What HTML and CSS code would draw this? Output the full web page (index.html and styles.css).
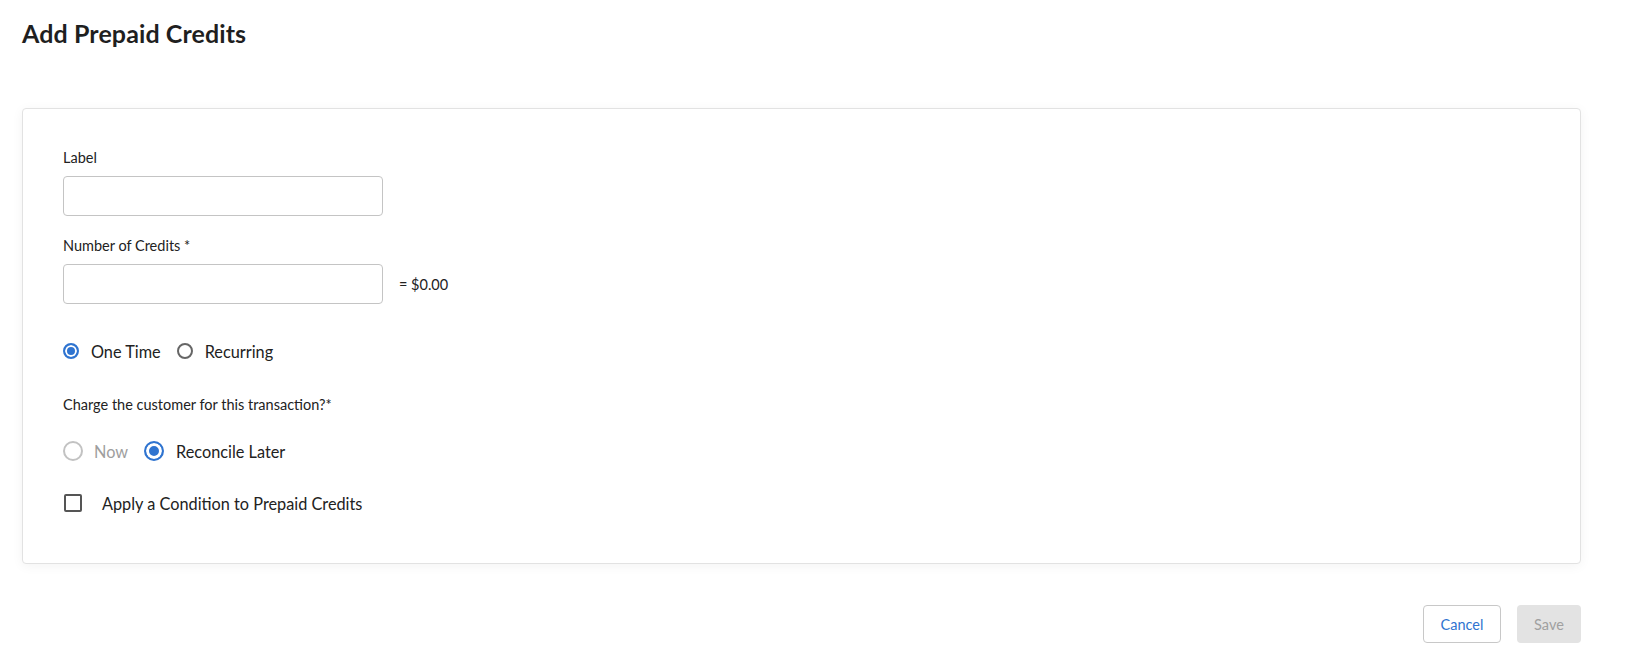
FILE: index.html
```html
<!DOCTYPE html>
<html lang="en">
<head>
<meta charset="utf-8">
<title>Add Prepaid Credits</title>
<link rel="stylesheet" href="styles.css">
</head>
<body>
<div class="page">
  <h1 class="title">Add Prepaid Credits</h1>
  <div class="card">
    <div class="field">
      <label class="field-label">Label</label>
      <div class="input"></div>
    </div>
    <div class="field field-credits">
      <label class="field-label">Number of Credits *</label>
      <div class="input-row">
        <div class="input"></div>
        <span class="amount">= $0.00</span>
      </div>
    </div>
    <div class="radio-row row-type">
      <span class="radio radio-sm checked"></span><span class="radio-text">One Time</span>
      <span class="radio radio-sm"></span><span class="radio-text">Recurring</span>
    </div>
    <div class="question">Charge the customer for this transaction?*</div>
    <div class="radio-row row-charge">
      <span class="radio radio-lg disabled"></span><span class="radio-text text-disabled">Now</span>
      <span class="radio radio-lg checked"></span><span class="radio-text">Reconcile Later</span>
    </div>
    <div class="check-row">
      <span class="checkbox"></span><span class="check-text">Apply a Condition to Prepaid Credits</span>
    </div>
  </div>
  <div class="actions">
    <button class="btn btn-cancel">Cancel</button>
    <button class="btn btn-save">Save</button>
  </div>
</div>
</body>
</html>
```

FILE: styles.css
```css
* { box-sizing: border-box; }
html, body { margin: 0; padding: 0; background: #ffffff; }
body {
  font-family: "Lato", "Noto Sans", sans-serif;
  color: #222222;
}
.page {
  padding: 0 45px 0 22px;
}
.title {
  margin: 0;
  padding-top: 17px;
  font-size: 25px;
  line-height: 32px;
  font-weight: 700;
  color: #1f1f1f;
  letter-spacing: 0.1px;
}
.card {
  margin-top: 59px;
  border: 1px solid #e2e2e2;
  border-radius: 4px;
  box-shadow: 0 2px 12px rgba(0, 0, 0, 0.05);
  padding: 39px 40px 48px 40px;
  background: #fff;
}
.field-label {
  display: block;
  font-size: 14.5px;
  line-height: 20px;
  margin-bottom: 8px;
  color: #222;
}
.field-credits { margin-top: 20px; }
.input {
  width: 320px;
  height: 40px;
  border: 1px solid #c4c4c4;
  border-radius: 4px;
  background: #fff;
}
.input-row {
  display: flex;
  align-items: center;
  gap: 16px;
}
.amount {
  font-size: 14.5px;
  color: #222;
}
.radio-row {
  display: flex;
  align-items: center;
  height: 24px;
}
.row-type { margin-top: 35px; }
.row-charge { margin-top: 24px; }
.radio {
  flex: none;
  display: inline-block;
  border-radius: 50%;
  border: 2px solid #666;
  background: #fff;
}
.radio-sm { width: 16px; height: 16px; }
.radio-lg { width: 20px; height: 20px; }
.radio.checked {
  border-color: #2f74d0;
  background: #2f74d0;
  box-shadow: inset 0 0 0 3px #fff;
}
.radio-sm.checked { box-shadow: inset 0 0 0 2px #fff; }
.radio.disabled { border-color: #c2c2c2; }
.radio-text {
  font-size: 16.3px;
  margin-left: 12px;
  margin-right: 16px;
  color: #222;
}
.text-disabled { color: #9e9e9e; margin-left: 11px; }
.question {
  margin-top: 32px;
  font-size: 14.5px;
  line-height: 20px;
}
.check-row {
  display: flex;
  align-items: center;
  height: 24px;
  margin-top: 28px;
}
.checkbox {
  flex: none;
  width: 18px;
  height: 18px;
  margin-left: 1px;
  border: 2px solid #555;
  border-radius: 2px;
}
.check-text {
  margin-left: 20px;
  font-size: 16.3px;
  color: #222;
}
.actions {
  display: flex;
  justify-content: flex-end;
  gap: 16px;
  margin-top: 41px;
}
.btn {
  font-family: inherit;
  font-size: 14.5px;
  height: 38px;
  border-radius: 4px;
  padding: 0;
  cursor: pointer;
}
.btn-cancel {
  width: 78px;
  border: 1px solid #c8c8c8;
  background: #fff;
  color: #2f74d0;
}
.btn-save {
  width: 64px;
  border: none;
  background: #e3e3e3;
  color: #a0a0a0;
}
```
